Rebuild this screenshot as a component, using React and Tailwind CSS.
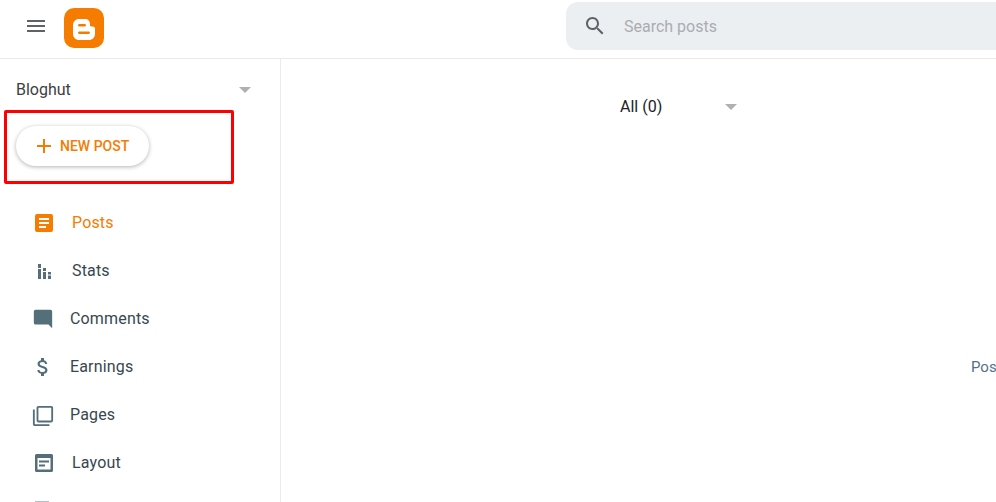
const Icon = ({ d, className }) => (
  <svg viewBox="0 0 24 24" className={className} fill="currentColor">
    <path d={d} />
  </svg>
);

const Caret = () => <div className="w-0 h-0 border-x-[6px] border-x-transparent border-t-[6px] border-t-[#b0b0b0]" />;

const NavItem = ({ icon, label, iconBox = "w-6 ml-[31px] mr-[17px]", active }) => (
  <div className={`flex items-center h-12 text-base tracking-[0.01em] ${active ? "text-[#f57c00]" : "text-[#37474f]"}`}>
    <div className={`flex justify-center ${iconBox} ${active ? "text-[#f57c00]" : "text-[#546e7a]"}`}>{icon}</div>
    {label}
  </div>
);

export default function App() {
  return (
    <div className="h-[502px] overflow-hidden bg-white relative font-['Roboto',sans-serif]">
      {/* Header */}
      <header className="flex items-center h-[59px] border-b border-[#ebebeb] pl-6 pb-[6px]">
        <Icon className="w-6 h-6 text-[#5f6368]" d="M3 18h18v-2H3v2zm0-5h18v-2H3v2zm0-7v2h18V6H3z" />
        <svg viewBox="0 0 40 40" className="w-10 h-10 ml-4 mt-1 shrink-0">
          <rect width="40" height="40" rx="10" fill="#f57c00" />
          <path
            fillRule="evenodd"
            fill="#fff"
            d="M15 11h6c3 0 5 2 5 5v1c0 1 .6 1.500 1.500 1.500h1c1.500 0 2.500.8 2.500 2V26c0 3.300-2.700 6-6 6H15c-3.300 0-6-2.700-6-6V17c0-3.300 2.700-6 6-6zm.3 5c-.7 0-1.300.6-1.300 1.300s.6 1.200 1.300 1.200h5.400c.7 0 1.300-.5 1.300-1.200S21.400 16 20.700 16h-5.400zm0 7.500c-.7 0-1.300.6-1.300 1.300s.6 1.200 1.300 1.200h9.400c.7 0 1.300-.5 1.300-1.200s-.6-1.300-1.300-1.300h-9.400z"
          />
        </svg>
        <div className="flex items-center h-12 ml-[462px] flex-1 bg-[#eceff1] rounded-l-xl pl-[17px]">
          <Icon className="w-6 h-6 text-[#5f6368]" d="M15.500 14h-.79l-.28-.27C15.410 12.590 16 11.110 16 9.500 16 5.910 13.090 3 9.500 3S3 5.910 3 9.500 5.910 16 9.500 16c1.610 0 3.090-.59 4.230-1.570l.27.28v.79l5 4.990L20.490 19l-4.990-5zm-6 0C7.010 14 5 11.990 5 9.500S7.010 5 9.500 5 14 7.010 14 9.500 11.990 14 9.500 14z" />
          <span className="ml-[17px] pt-[2px] text-base text-[#a9adb1]">Search posts</span>
        </div>
      </header>

      <div className="flex">
        {/* Sidebar */}
        <aside className="w-[281px] shrink-0 h-[443px] border-r border-[#ebebeb]">
          <div className="flex items-center justify-between h-[62px] pl-4 pr-[29px] text-base text-[#3c4043]">
            Bloghut
            <Caret />
          </div>
          <div className="pl-4 pt-[5px] pb-[33px]">
            <button className="flex items-center w-[133px] h-10 pl-4 rounded-full bg-white shadow-[0_1px_4px_rgba(0,0,0,0.3)] text-sm font-medium text-[#f57c00]">
              <Icon className="w-6 h-6 shrink-0" d="M19 13h-6v6h-2v-6H5v-2h6V5h2v6h6v2z" />
              <span className="ml-[4px]">NEW POST</span>
            </button>
          </div>
          <nav>
            <NavItem
              active
              label="Posts"
              iconBox="w-[18px] ml-[35px] mr-[19px]"
              icon={
                <svg viewBox="0 0 18 18" className="w-[18px] h-[18px]">
                  <rect width="18" height="18" rx="2" fill="#f57c00" />
                  <path fill="#fff" d="M4 4h10v2H4zM4 8h10v2H4zM4 12h7v2H4z" />
                </svg>
              }
            />
            <NavItem
              label="Stats"
              iconBox="w-[13px] ml-[38px] mr-[21px]"
              icon={
                <svg viewBox="0 0 13 15" className="w-[13px] h-[15px] shrink-0" fill="currentColor">
                  <path d="M0 0h3v4H0zM0 5h3v10H0zM5 4h3v3H5zM5 8h3v7H5zM10 8h3v2.500h-3zM10 11.500h3V15h-3z" />
                </svg>
              }
            />
            <NavItem
              label="Comments"
              iconBox="w-[22px] ml-[32px] mr-[16px]"
              icon={<Icon className="w-[22px] h-[22px]" d="M21.990 4c0-1.100-.89-2-1.990-2H4c-1.100 0-2 .9-2 2v12c0 1.100.9 2 2 2h14l4 4-.01-18z" />}
            />
            <NavItem
              label="Earnings"
              iconBox="w-6 ml-[31px] mr-[15px]"
              icon={<Icon className="w-6 h-6" d="M11.800 10.900c-2.270-.59-3-1.200-3-2.150 0-1.090 1.010-1.850 2.700-1.850 1.780 0 2.440.85 2.500 2.100h2.210c-.07-1.720-1.120-3.300-3.210-3.810V3h-3v2.160c-1.940.42-3.500 1.680-3.500 3.610 0 2.310 1.910 3.460 4.700 4.130 2.500.6 3 1.480 3 2.410 0 .69-.49 1.790-2.700 1.790-2.060 0-2.870-.92-2.980-2.100h-2.200c.12 2.190 1.760 3.420 3.680 3.830V21h3v-2.150c1.950-.37 3.500-1.500 3.500-3.550 0-2.840-2.430-3.810-4.700-4.400z" />}
            />
            <NavItem
              label="Pages"
              iconBox="w-[22px] ml-[32px] mr-[16px] mt-[2px]"
              icon={<Icon className="w-[22px] h-[22px]" d="M3 5H1v16c0 1.100.9 2 2 2h16v-2H3V5zm18-4H7c-1.100 0-2 .9-2 2v14c0 1.100.9 2 2 2h14c1.100 0 2-.9 2-2V3c0-1.100-.9-2-2-2zm0 16H7V3h14v14z" />}
            />
            <NavItem
              label="Layout"
              iconBox="w-[18px] ml-[35px] mr-[19px]"
              icon={
                <svg viewBox="0 0 18 18" className="w-[18px] h-[18px]">
                  <path fill="currentColor" fillRule="evenodd" d="M1.500 0h15A1.500 1.500 0 0 1 18 1.500v15a1.500 1.500 0 0 1-1.500 1.500h-15A1.500 1.500 0 0 1 0 16.500v-15A1.500 1.500 0 0 1 1.500 0zM2.500 4v11.500h13V4h-13zM4 6.500h10v2H4zM4 10.500h6v2H4z" />
                </svg>
              }
            />
            <NavItem
              label=""
              iconBox="w-[14px] ml-[35px] mr-[23px]"
              icon={<div className="w-[14px] h-5 bg-[#b0bec5]" />}
            />
          </nav>
        </aside>

        {/* Main */}
        <main className="flex-1 relative overflow-hidden">
          <div className="flex items-center h-[96px] pl-[339px] text-base text-[#202124]">
            <span className="w-[105px]">All (0)</span>
            <Caret />
          </div>
          <p className="mt-[201px] pl-[690px] text-[15px] text-[#54708c] whitespace-nowrap">Posts</p>
        </main>
      </div>

      {/* Red annotation box */}
      <div className="absolute left-[4px] top-[110px] w-[230px] h-[74px] border-[3px] border-[#ff0000] rounded-[2px] pointer-events-none" />
    </div>
  );
}
